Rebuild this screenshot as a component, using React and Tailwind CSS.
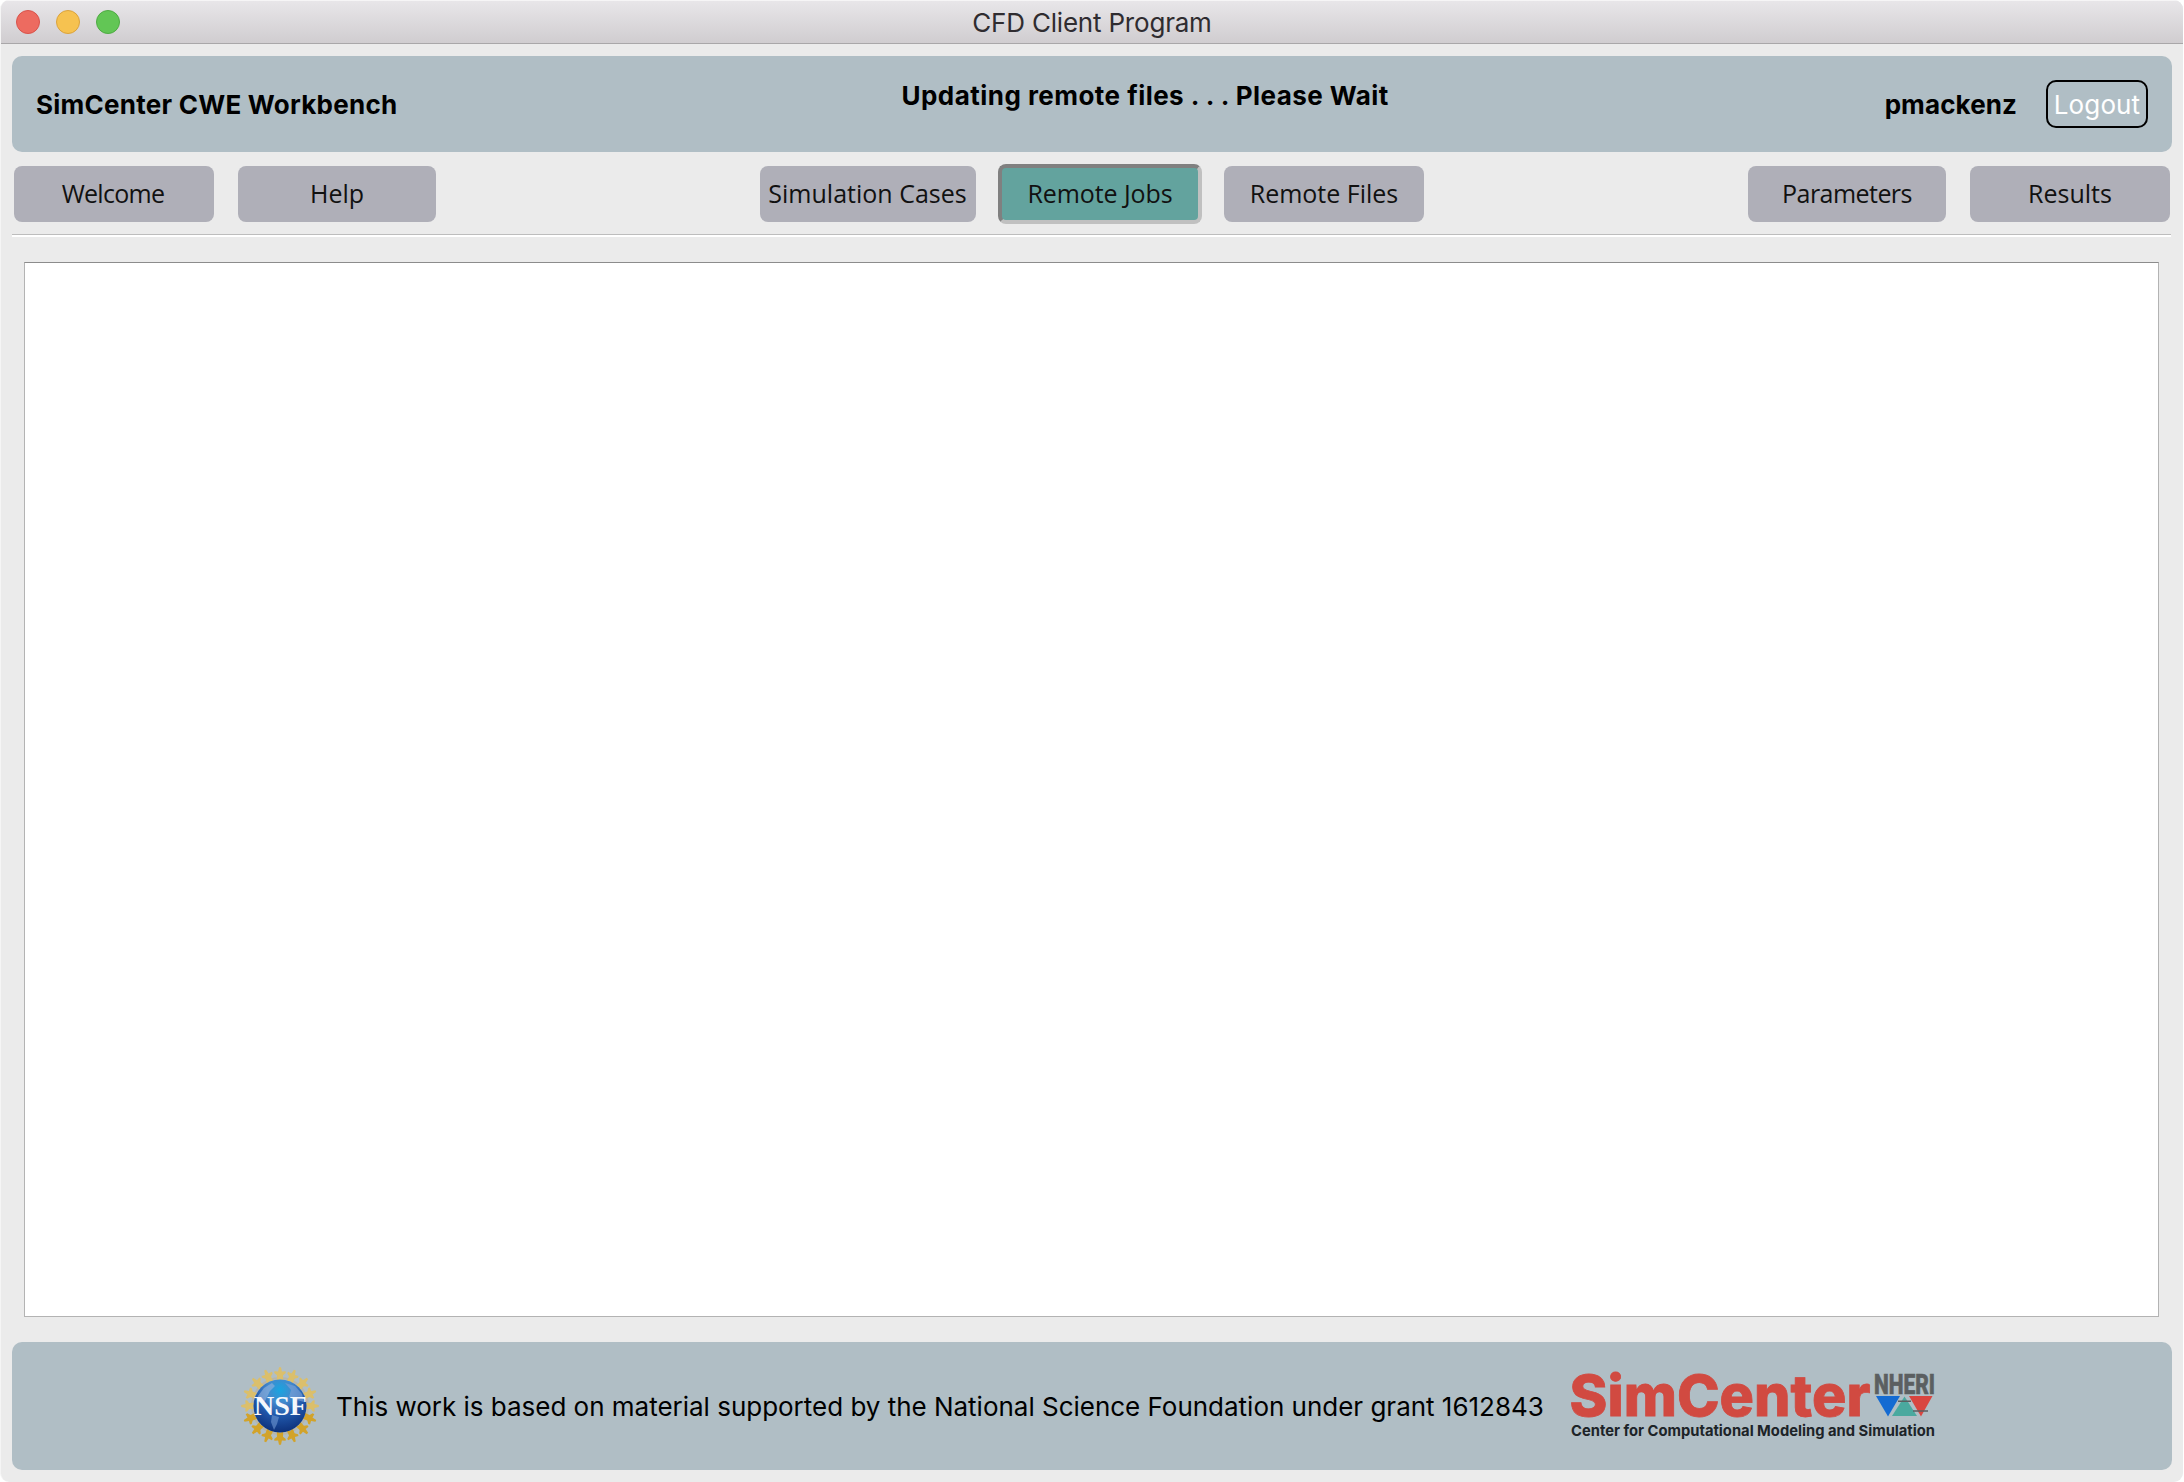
function TrafficLight({ color }) {
  return <span className={`size-6 rounded-full border ${color}`} />;
}

function TabButton({ children, className = "" }) {
  return (
    <button
      className={`flex h-14 shrink-0 items-center justify-center whitespace-nowrap rounded-lg bg-[#afafb8] pb-px font-['Open_Sans','Noto_Sans',sans-serif] text-[25px] leading-none text-[#111] ${className}`}
    >
      {children}
    </button>
  );
}

// Pointed star used around the rim of the NSF seal
const STAR = "M-1 -6.6 H1 L1.9 -2.2 L5.6 -2.6 L5.8 -0.8 L3 1.4 L3.2 7 L0 5 L-3.2 7 L-3 1.4 L-5.8 -0.8 L-5.6 -2.6 L-1.9 -2.2 Z";

function NsfSeal() {
  const angles = Array.from({ length: 16 }, (_, i) => i * 22.5);
  return (
    <svg viewBox="0 0 80 80" className="size-20 shrink-0">
      <defs>
        <radialGradient id="globe" cx="0.5" cy="0.2" r="0.85">
          <stop offset="0" stopColor="#18a5e0" />
          <stop offset="0.28" stopColor="#4389cd" />
          <stop offset="0.58" stopColor="#1f55a8" />
          <stop offset="1" stopColor="#0a2a72" />
        </radialGradient>
      </defs>
      <circle cx="40" cy="40" r="28" fill="none" stroke="#b9b6a8" strokeWidth="2" />
      {angles.map((a) => (
        <g key={a} transform={`rotate(${a} 40 40) translate(40 7.8)`}>
          <path d={STAR} fill={a > 90 && a < 270 ? "#d2a32a" : "#dbbf6b"} />
        </g>
      ))}
      <circle cx="40" cy="40" r="26.5" fill="url(#globe)" />
      <path d="M18 30 L24 22 L32 17 L35 20 L30 25 L27 31 L24 37 L17 36 Z" fill="#8fb1dc" opacity="0.65" />
      <path d="M45 17 L55 20 L62 28 L64 36 L57 34 L49 31 L51 24 Z" fill="#7ba0d6" opacity="0.65" />
      <path d="M32 49 L39 51 L37 58 L34 64 L31 56 Z" fill="#6f98d2" opacity="0.6" />
      <text
        x="14"
        y="49"
        textLength="53"
        lengthAdjust="spacingAndGlyphs"
        className="fill-[#f4f7fc] font-['Liberation_Serif',serif] text-[28px] font-bold"
      >
        NSF
      </text>
    </svg>
  );
}

function SimCenterLogo() {
  return (
    <svg viewBox="0 -14 380 108" className="h-[108px] w-[380px] shrink-0">
      <text
        x="1.5"
        y="49.5"
        textLength="301"
        lengthAdjust="spacingAndGlyphs"
        className="fill-[#d14a41] stroke-[#d14a41] stroke-[0.8px] font-['Inter',sans-serif] text-[57px] font-extrabold"
      >
        SimCenter
      </text>
      <text
        x="3"
        y="70"
        textLength="364"
        lengthAdjust="spacingAndGlyphs"
        className="fill-[#1d2428] font-['Inter',sans-serif] text-[15px] font-bold"
      >
        Center for Computational Modeling and Simulation
      </text>
      <text
        x="306"
        y="28"
        textLength="61"
        lengthAdjust="spacingAndGlyphs"
        className="fill-[#5b5f61] stroke-[#5b5f61] stroke-[0.7px] font-['Roboto',sans-serif] text-[28px] font-extrabold"
      >
        NHERI
      </text>
      <path d="M308 30 H332 L320 50.5 Z" fill="#146bd2" />
      <path d="M336.5 30.5 L349 50 H324 Z" fill="#4aa99f" />
      <path d="M341 30 H364.5 L353 50.5 Z" fill="#d9453f" />
      <path d="M330 35.2 H343 M345 45 H360" stroke="#5b5f61" strokeWidth="1.6" />
    </svg>
  );
}

export default function App() {
  return (
    <div className="h-[1482px] w-[2184px] bg-white font-['Inter',sans-serif] text-[26px] leading-8 text-black">
      <div className="flex h-full w-[2183px] flex-col overflow-hidden rounded-[9px] border-l border-[#f5f5f5] bg-[#ebebeb]">
        <header className="flex h-11 shrink-0 items-center border-t border-b border-t-[#f6f5f6] border-b-[#a9a7a9] bg-linear-to-b from-[#e8e6e9] to-[#d0cdd0] pl-[15px]">
          <div className="flex flex-1 gap-4">
            <TrafficLight color="border-[#d9534b] bg-[#ed6b60]" />
            <TrafficLight color="border-[#dba33c] bg-[#f6c250]" />
            <TrafficLight color="border-[#4eab43] bg-[#62c655]" />
          </div>
          <h1 className="pt-[2px] tracking-[-0.2px] text-[#2f2c30]">CFD Client Program</h1>
          <div className="mr-[15px] flex-1" />
        </header>

        <section className="mx-[11px] mt-3 flex h-24 shrink-0 items-center rounded-[10px] bg-[#b0bec5] pr-6 pl-6 font-bold">
          <div className="w-[865.5px] pt-[2px] tracking-[0.25px]">SimCenter CWE Workbench</div>
          <div className="-mt-4 flex-1 tracking-[0.46px]">
            Updating remote files . . . Please Wait
          </div>
          <div className="mr-[29px] pt-[2px] tracking-[0.1px]">pmackenz</div>
          <button className="flex h-12 w-[102px] items-center justify-center rounded-[10px] border-2 border-black pt-[2px] font-normal tracking-[0.13px] text-white">
            Logout
          </button>
        </section>

        <nav className="mr-[13px] ml-[13px] mt-[12px] flex h-[60px] shrink-0 items-center">
          <TabButton className="w-[200px] pr-[2px] tracking-[-0.7px]">Welcome</TabButton>
          <TabButton className="ml-6 w-[198px]">Help</TabButton>
          <div className="flex flex-1 items-center justify-center">
            <TabButton className="w-[216px] pr-px">Simulation Cases</TabButton>
            <TabButton className="ml-[22px] h-[60px]! w-[204px] border-4 border-t-[#808080] border-r-[#c0c0c0] border-b-[#c0c0c0] border-l-[#808080] bg-[#63a39e]! tracking-[-0.1px]">
              Remote Jobs
            </TabButton>
            <TabButton className="ml-[22px] w-[200px]">Remote Files</TabButton>
          </div>
          <TabButton className="w-[198px] tracking-[-0.55px]">Parameters</TabButton>
          <TabButton className="ml-6 w-[200px]">Results</TabButton>
        </nav>

        <div className="mr-3 ml-[11px] mt-[10px] h-[3px] shrink-0 border-t border-[#bdbdbd] bg-white" />

        <main className="mr-6 ml-[23px] mt-[25px] h-[1055px] shrink-0 border border-[#b3b3b3] border-t-[#8c8c8c] bg-white" />

        <footer className="mx-[11px] mt-[25px] flex h-32 shrink-0 items-center rounded-[10px] bg-[#b0bec5] pl-[228px]">
          <NsfSeal />
          <p className="ml-4 w-[1232px] whitespace-nowrap pt-[2px] tracking-[-0.015px]">
            This work is based on material supported by the National Science Foundation under grant 1612843
          </p>
          <SimCenterLogo />
        </footer>
      </div>
    </div>
  );
}
